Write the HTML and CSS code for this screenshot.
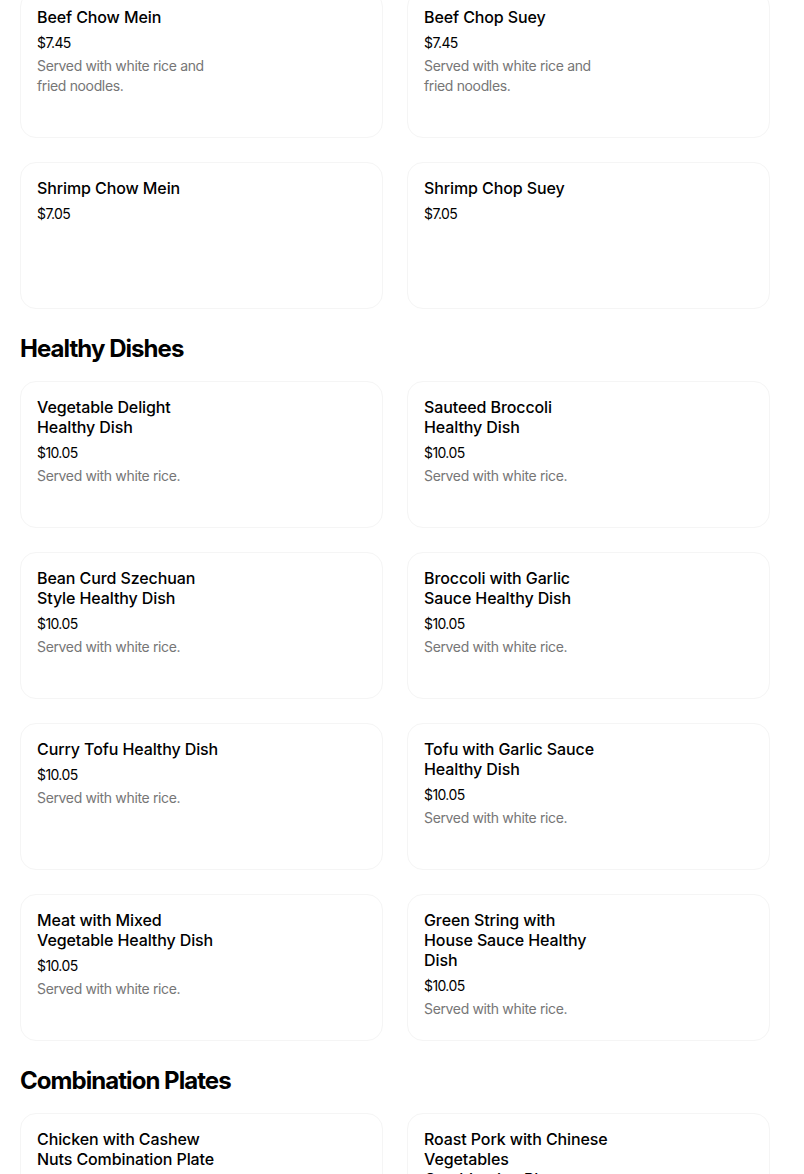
FILE: index.html
```html
<!DOCTYPE html>
<html lang="en">
<head>
<meta charset="utf-8">
<title>Menu</title>
<link rel="stylesheet" href="styles.css">
</head>
<body>
<main class="menu">
  <section class="section first">
    <div class="grid">
      <div class="card"><div class="info"><div class="title">Beef Chow Mein</div><div class="price">$7.45</div><div class="desc">Served with white rice and fried noodles.</div></div></div>
      <div class="card"><div class="info"><div class="title">Beef Chop Suey</div><div class="price">$7.45</div><div class="desc">Served with white rice and fried noodles.</div></div></div>
      <div class="card"><div class="info"><div class="title">Shrimp Chow Mein</div><div class="price">$7.05</div></div></div>
      <div class="card"><div class="info"><div class="title">Shrimp Chop Suey</div><div class="price">$7.05</div></div></div>
    </div>
  </section>
  <section class="section">
    <h2 class="heading">Healthy Dishes</h2>
    <div class="grid">
      <div class="card"><div class="info"><div class="title">Vegetable Delight Healthy Dish</div><div class="price">$10.05</div><div class="desc">Served with white rice.</div></div></div>
      <div class="card"><div class="info"><div class="title">Sauteed Broccoli Healthy Dish</div><div class="price">$10.05</div><div class="desc">Served with white rice.</div></div></div>
      <div class="card"><div class="info"><div class="title">Bean Curd Szechuan Style Healthy Dish</div><div class="price">$10.05</div><div class="desc">Served with white rice.</div></div></div>
      <div class="card"><div class="info"><div class="title">Broccoli with Garlic Sauce Healthy Dish</div><div class="price">$10.05</div><div class="desc">Served with white rice.</div></div></div>
      <div class="card"><div class="info"><div class="title">Curry Tofu Healthy Dish</div><div class="price">$10.05</div><div class="desc">Served with white rice.</div></div></div>
      <div class="card"><div class="info"><div class="title">Tofu with Garlic Sauce Healthy Dish</div><div class="price">$10.05</div><div class="desc">Served with white rice.</div></div></div>
      <div class="card"><div class="info"><div class="title">Meat with Mixed Vegetable Healthy Dish</div><div class="price">$10.05</div><div class="desc">Served with white rice.</div></div></div>
      <div class="card"><div class="info"><div class="title">Green String with House Sauce Healthy Dish</div><div class="price">$10.05</div><div class="desc">Served with white rice.</div></div></div>
    </div>
  </section>
  <section class="section">
    <h2 class="heading">Combination Plates</h2>
    <div class="grid">
      <div class="card"><div class="info"><div class="title">Chicken with Cashew Nuts Combination Plate</div><div class="price">$9.95</div><div class="desc">Served with pork fried rice and egg roll.</div></div></div>
      <div class="card"><div class="info"><div class="title">Roast Pork with Chinese Vegetables Combination Plate</div><div class="price">$9.95</div><div class="desc">Served with pork fried rice and egg roll.</div></div></div>
    </div>
  </section>
</main>
</body>
</html>
```

FILE: styles.css
```css
* { box-sizing: border-box; }
html, body { margin: 0; padding: 0; background: #ffffff; }
body {
  font-family: Inter, "Noto Sans", "Liberation Sans", sans-serif;
  color: #000000;
  overflow: hidden;
}
.menu {
  width: 750px;
  margin: -9px 0 0 20px;
}
.section { padding-top: 24px; }
.section.first { padding-top: 0; }
.heading {
  margin: 0 0 16px 0;
  font-size: 24px;
  line-height: 32px;
  font-weight: 700;
  letter-spacing: -0.95px;
}
.grid {
  display: grid;
  grid-template-columns: 1fr 1fr;
  gap: 24px;
}
.card {
  height: 147px;
  border: 1px solid #f5f5f5;
  border-radius: 16px;
  padding: 15px 16px 16px 16px;
  background: #fff;
  overflow: hidden;
}
.info { max-width: 184px; }
.title {
  font-size: 16px;
  line-height: 20px;
  font-weight: 500;
  letter-spacing: -0.1px;
}
.price {
  margin-top: 6px;
  font-size: 14px;
  line-height: 20px;
  letter-spacing: -0.6px;
}
.desc {
  margin-top: 3px;
  font-size: 14px;
  line-height: 20px;
  color: #767676;
  letter-spacing: -0.35px;
}
```
